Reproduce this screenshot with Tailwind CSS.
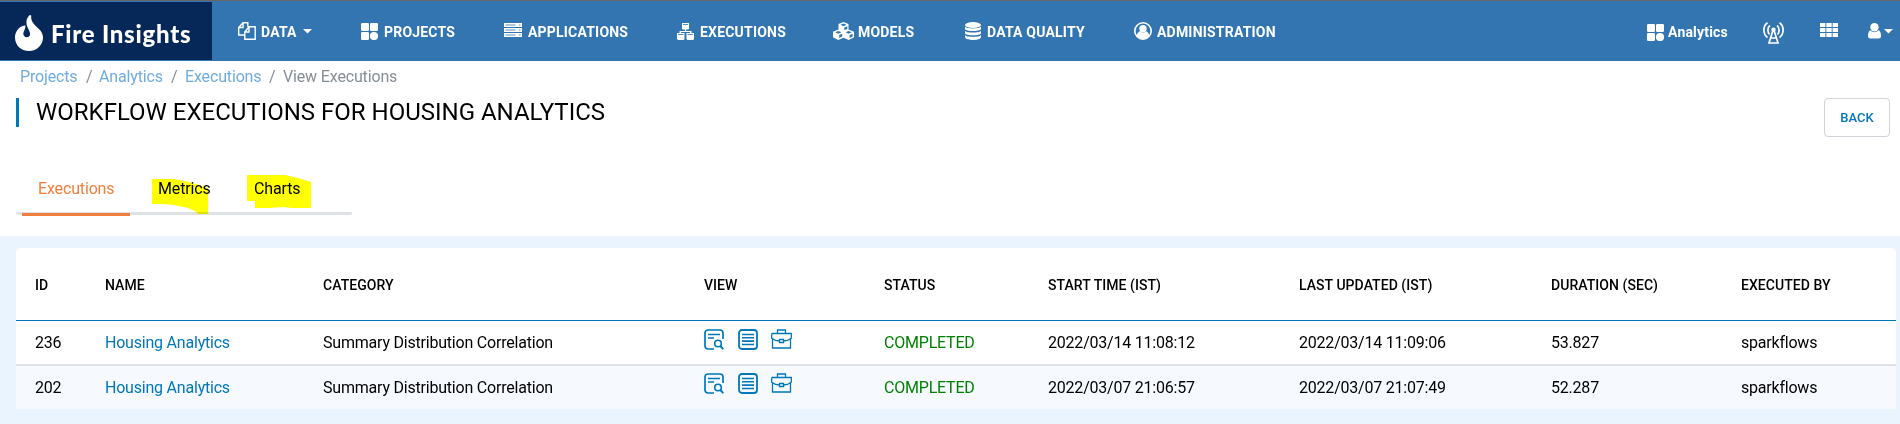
<!DOCTYPE html>
<html lang="en">
<head>
<meta charset="utf-8">
<title>Fire Insights</title>
<script src="https://cdn.jsdelivr.net/npm/@tailwindcss/browser@4"></script>
</head>
<body class="w-[1900px] h-[424px] overflow-hidden bg-white font-['Roboto',sans-serif] text-black">
<svg class="hidden">
  <symbol id="tiles" viewBox="0 0 17 17"><rect width="8" height="8" rx="1.3"/><rect x="9" width="8" height="8" rx="1.3"/><rect y="9" width="8" height="8" rx="1.3"/><circle cx="13" cy="13" r="4.1"/></symbol>
  <symbol id="doc-search" viewBox="0 0 20 21"><path d="M10 20H4a3 3 0 0 1-3-3V4a3 3 0 0 1 3-3h12a3 3 0 0 1 3 3v6M4 5.5h12M4 9h6" stroke-width="1.7"/><circle cx="14" cy="14.500" r="3.300" stroke-width="1.600"/><path d="M16.300 17l3 3.200" stroke-width="1.900"/></symbol>
  <symbol id="doc-lines" viewBox="0 0 20 21"><rect x="1" y="1" width="18" height="19" rx="3" stroke-width="1.800"/><path d="M4 5.500h12M4 8.800h12M4 12.100h12M4 15.500h12" stroke-width="1.600"/></symbol>
  <symbol id="briefcase" viewBox="0 0 21 20"><path d="M.7 4.500h19.600v4.700Q17 11.800 12.500 12M8.500 12Q4 11.800.7 9.200V4.500M1.500 10v9h18v-9M6.500 4.500V1h8v3.500M8.500 10.500h4v3h-4z" stroke-width="1.300"/></symbol>
</svg>

<header class="flex h-[61px] border-t border-[#666666] bg-[#3375b1] text-white">
  <div class="mt-px flex h-[58px] w-[212px] shrink-0 bg-[#052859] pl-[15px] pt-[13px]">
    <svg class="h-9 w-7 shrink-0" viewBox="0 0 28 36" fill="#fff"><path d="M14.800 0C11 3.500 11 7.500 12.100 11c1 3.200 3.100 5.400 3 8.200-.1 1.800-1.500 3-3.300 3-2.100 0-3.700-1.500-3.500-3.900.2-2.300 2.300-4.300 2.200-7.900C5.600 10.100 0 15.600 0 22.200 0 30.200 6 36 14 36s14-5.900 14-13.500c0-5.300-3.600-8.200-7-11.300C17.500 8 15.600 4.600 16.200.4z"/></svg>
    <span class="ml-2 mt-[3px] whitespace-nowrap font-[Lato] text-[24px] font-black leading-[32px] tracking-[0.75px]">Fire Insights</span>
  </div>
  <nav class="flex h-[60px] grow text-[14px] font-bold leading-[60px] tracking-[0.2px] whitespace-nowrap">
    <div class="ml-[26px] flex w-[123px]">
      <svg class="mt-[21px] h-[18px] w-[18px]" viewBox="0 0 18 18" fill="none" stroke="#fff" stroke-width="1.400"><path d="M6.500 13H.7V5.500L5 .7h4.800v4M5 .7v4.800H.7M6.800 10L11 4.700h6.200v12.500H6.800zM11 4.700V10H6.800"/></svg>
      <span class="ml-[5px] mt-px">DATA</span>
      <svg class="ml-[6px] mt-[28px] h-[5px] w-[9px]" viewBox="0 0 9 5" fill="#fff"><path d="M0 0h9L4.500 4.500z"/></svg>
    </div>
    <div class="flex w-[143px]"><svg class="mt-[22px] h-[17px] w-[17px]" fill="#fff"><use href="#tiles"/></svg><span class="ml-[6px] mt-px">PROJECTS</span></div>
    <div class="flex w-[173px]">
      <svg class="mt-[22px] h-[14px] w-[18px]" viewBox="0 0 18 14"><path fill="#fff" d="M0 0h18v4H0zM0 5h18v4H0zM0 10h18v4H0z"/><path stroke="#3375b1" stroke-width=".8" d="M1.500 2h10M1.500 7h10M1.500 12h10M15 2h1.500M15 7h1.500M15 12h1.500"/></svg>
      <span class="ml-[6px] mt-px">APPLICATIONS</span></div>
    <div class="flex w-[156px]">
      <svg class="mt-[22px] h-[17px] w-[17px]" viewBox="0 0 17 17" fill="#fff"><path d="M5 0h7v5.500q0 1-1 1H9V8h5.500v2H13V9H4v1H2.500V8H8V6.500H6q-1 0-1-1z"/><path d="M0 10h7.500v5.500q0 1.500-1.500 1.500H1.500Q0 17 0 15.500zM9.500 10H17v5.500q0 1.500-1.500 1.500H11q-1.500 0-1.500-1.500z"/><path stroke="#3375b1" d="M6 1.500h5M1 11.500h5.500M10.500 11.500H16" stroke-width=".8"/></svg>
      <span class="ml-[6px] mt-px">EXECUTIONS</span></div>
    <div class="flex w-[132px]">
      <svg class="mt-[21px] h-[18px] w-[21px]" viewBox="0 0 21 18" fill="#fff"><path d="M10.500 0l5 2v5.500l5.500 2.200v5.500L15.800 18l-5.300-2.300L5.200 18 0 15.200V9.700l5.500-2.200V2z"/><g fill="#3375b1"><path d="M10.500 1.500l3 1.300-3 1.400-3-1.400zM5.300 9l3 1.300-3 1.400-3-1.400zM15.700 9l3 1.300-3 1.400-3-1.400zM11.300 5.500l3-1.200v2.600l-3 1.200zM6.200 13l3-1.300v2.700l-3 1.500zM16.600 13l3-1.300v2.700l-3 1.500z"/></g></svg>
      <span class="ml-[4px] mt-px">MODELS</span></div>
    <div class="flex w-[169px]">
      <svg class="mt-[21px] h-[18px] w-[16px]" viewBox="0 0 16 18" fill="#fff"><ellipse cx="8" cy="3" rx="8" ry="3"/><path d="M0 4.500C1 7 15 7 16 4.500V7c-1 2.700-15 2.700-16 0zM0 8.700c1 2.500 15 2.500 16 0v2.500c-1 2.700-15 2.700-16 0zM0 12.900c1 2.500 15 2.500 16 0v2.300c-1 3.700-15 3.700-16 0z"/></svg>
      <span class="ml-[6px] mt-px">DATA QUALITY</span></div>
    <div class="flex w-[513px]">
      <svg class="mt-[21px] h-[18px] w-[18px]" viewBox="0 0 18 18"><circle cx="9" cy="9" r="8.200" fill="none" stroke="#fff" stroke-width="1.600"/><circle cx="9" cy="6.700" r="3.700" fill="#fff"/><path fill="#fff" d="M2.500 14c.6-3 2-4.300 3.400-4.700q3.100 2.600 6.200 0c1.400.4 2.800 1.700 3.400 4.700Q9 20.500 2.500 14z"/></svg>
      <span class="ml-[5px] mt-px">ADMINISTRATION</span></div>
    <div class="flex w-[116px]"><svg class="mt-[23px] h-[17px] w-[17px]" fill="#fff"><use href="#tiles"/></svg><span class="ml-[4px] mt-px">Analytics</span></div>
    <svg class="mt-[21px] h-[22px] w-[21px]" viewBox="0 0 21 22" fill="none" stroke="#fff" stroke-width="1.700"><path d="M4.500.7C-.3 4-.3 12 4.500 15.500M16.500.7c4.800 3.300 4.800 11.300 0 14.800M7 3.500C4.300 5.500 4.300 10.500 6.500 12.300M14 3.500c2.700 2 2.700 7 .5 8.800M9.800 9L6 21h9L11.200 9M8 16h5"/><circle cx="10.500" cy="7.700" r="2.200" fill="#fff" stroke="none"/></svg>
    <svg class="ml-[36px] mt-[22px] h-[14px] w-[18px]" viewBox="0 0 18 14" fill="#fff"><path d="M0 0h5.400v4H0zM6.300 0h5.400v4H6.300zM12.600 0H18v4h-5.400zM0 5h5.400v4H0zM6.300 5h5.400v4H6.300zM12.600 5H18v4h-5.400zM0 10h5.400v4H0zM6.300 10h5.400v4H6.300zM12.600 10H18v4h-5.400z"/></svg>
    <svg class="ml-[30px] mt-[22px] h-[16px] w-[13px]" viewBox="0 0 13 16" fill="#fff"><circle cx="6.500" cy="4.300" r="4.200"/><path d="M2.300 7.300Q6.500 11 10.700 7.300 13 8.500 13 13q0 2.500-2.500 2.500h-8Q0 15.500 0 13q0-4.500 2.300-5.700z"/></svg>
    <svg class="ml-[3px] mt-[28px] h-[5px] w-[9px]" viewBox="0 0 9 5" fill="#fff"><path d="M0 0h9L4.500 4.500z"/></svg>
  </nav>
</header>

<div class="flex h-[31px] pl-5 text-[16px] leading-[31px] tracking-[-0.15px] text-[#868e96]">
  <a class="w-[66px] text-[#70acdf]">Projects</a><span class="w-[13px]">/</span>
  <a class="w-[72px] text-[#70acdf]">Analytics</a><span class="w-[14px]">/</span>
  <a class="w-[84px] text-[#70acdf]">Executions</a><span class="w-[14px]">/</span>
  <span>View Executions</span>
</div>

<div class="flex h-[80px] justify-between pl-4 pr-[10px] pt-[6px]">
  <h1 class="h-[29px] border-l-[3px] border-[#0077b9] pl-[17px] text-[24px] leading-[29px]">WORKFLOW EXECUTIONS FOR HOUSING ANALYTICS</h1>
  <button class="h-[39px] w-[66px] rounded-[4px] border border-[#ced4da] text-[13px] font-medium text-[#0077b9]">BACK</button>
</div>

<div class="h-[64px] pl-4">
  <div class="relative flex h-[43px] w-[336px] rounded-[2px] border-b-[3px] border-[#dee2e6] text-[16px] leading-[33px] tracking-[-0.15px]">
    <div class="ml-[6px] h-[44px] w-[108px] shrink-0 border-b-[3px] border-[#f0803f] pl-4 text-[#f0803f]">Executions</div>
    <div class="w-[96px] shrink-0 pl-[28px]">Metrics</div>
    <div class="pl-[28px]">Charts</div>
    <svg class="absolute left-[136px] top-[2px] h-[44px] w-[162px] mix-blend-multiply" viewBox="0 0 162 44" fill="#ffff00"><path d="M0 5h22l10 2 12 3 12 4v26H46q-4-4-10-6l-14-3-10-1H0zM95 1h38l13 3 13 4v26h-20l-7-1-15 1H103v-7h-8z"/></svg>
  </div>
</div>

<main class="h-[188px] bg-[#e9f4ff] pl-4 pr-1 pt-3">
  <div class="overflow-hidden rounded-t-[5px] bg-white text-[16px] tracking-[-0.21px]">
    <div class="grid h-[73px] grid-cols-[70px_218px_381px_180px_164px_251px_252px_190px_1fr] border-b border-[#0077b9] pl-[19px] text-[14px] font-medium leading-[75px] tracking-[0.05px]">
      <span>ID</span><span>NAME</span><span>CATEGORY</span><span>VIEW</span><span>STATUS</span><span>START TIME (IST)</span><span>LAST UPDATED (IST)</span><span>DURATION (SEC)</span><span>EXECUTED BY</span>
    </div>
    <div class="grid h-[45px] grid-cols-[70px_218px_381px_180px_164px_251px_252px_190px_1fr] border-b-2 border-[#dee2e6] pl-[19px] leading-[43px]">
      <span>236</span><a class="text-[#0077b9]">Housing Analytics</a><span>Summary Distribution Correlation</span>
      <span class="flex gap-[13px] pt-[8px]"><svg class="mr-px h-[21px] w-5 fill-none stroke-[#0077b9]"><use href="#doc-search"/></svg><svg class="h-[21px] w-5 fill-none stroke-[#0077b9]"><use href="#doc-lines"/></svg><svg class="h-5 w-[21px] fill-none stroke-[#0077b9]"><use href="#briefcase"/></svg></span>
      <span class="text-[#008000]">COMPLETED</span><span>2022/03/14 11:08:12</span><span>2022/03/14 11:09:06</span><span>53.827</span><span>sparkflows</span>
    </div>
    <div class="grid h-[43px] grid-cols-[70px_218px_381px_180px_164px_251px_252px_190px_1fr] bg-[#f6faff] pl-[19px] leading-[43px]">
      <span>202</span><a class="text-[#0077b9]">Housing Analytics</a><span>Summary Distribution Correlation</span>
      <span class="flex gap-[13px] pt-[7px]"><svg class="mr-px h-[21px] w-5 fill-none stroke-[#0077b9]"><use href="#doc-search"/></svg><svg class="h-[21px] w-5 fill-none stroke-[#0077b9]"><use href="#doc-lines"/></svg><svg class="h-5 w-[21px] fill-none stroke-[#0077b9]"><use href="#briefcase"/></svg></span>
      <span class="text-[#008000]">COMPLETED</span><span>2022/03/07 21:06:57</span><span>2022/03/07 21:07:49</span><span>52.287</span><span>sparkflows</span>
    </div>
  </div>
</main>
</body>
</html>
